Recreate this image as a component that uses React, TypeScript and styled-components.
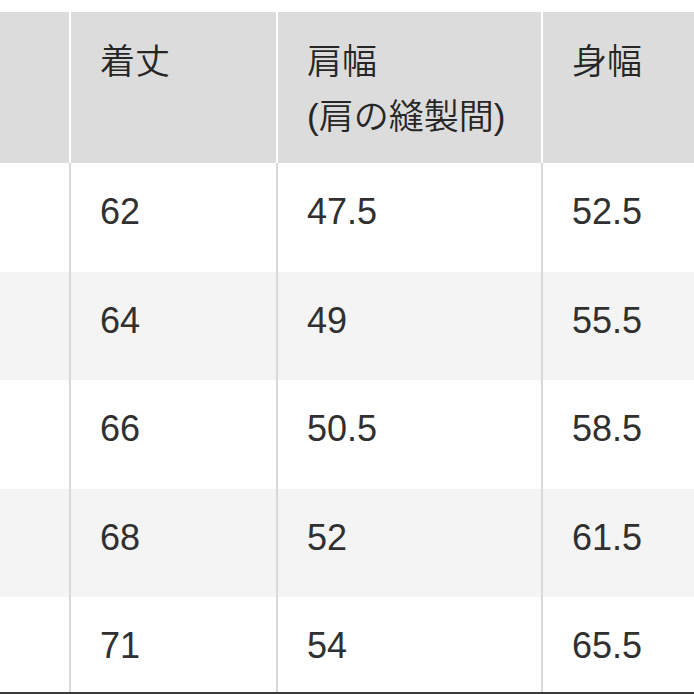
import styled, { createGlobalStyle } from 'styled-components';

const GlobalStyle = createGlobalStyle`
  html, body {
    margin: 0;
    padding: 0;
    background: #ffffff;
  }
  body {
    font-family: 'Liberation Sans', 'Noto Sans CJK JP', sans-serif;
    color: #222222;
  }
`;

const Page = styled.div`
  width: 694px;
  height: 694px;
  box-sizing: border-box;
  padding-top: 12px;
  border-bottom: 2px solid #3a3a3a;
  overflow: hidden;
  background: #ffffff;
`;

const Row = styled.div<{ $head?: boolean; $alt?: boolean }>`
  display: grid;
  grid-template-columns: 69px 207px 265px 1fr;
  height: ${(p) => (p.$head ? '151px' : '108.5px')};
  background: ${(p) => (p.$head ? '#dcdcdc' : p.$alt ? '#f4f4f4' : '#ffffff')};
`;

const HeadCell = styled.div`
  box-sizing: border-box;
  padding: 19px 0 0 29px;
  font-family: 'Noto Sans CJK JP', 'Liberation Sans', sans-serif;
  font-size: 35px;
  font-weight: 350;
  line-height: 55px;
  color: #262626;
  & + & {
    border-left: 2px solid #ffffff;
  }
`;

const Paren = styled.span`
  font-family: 'Liberation Sans', sans-serif;
  font-weight: 400;
`;

const Cell = styled.div`
  box-sizing: border-box;
  padding: 29px 0 0 29px;
  font-size: 36px;
  line-height: 40px;
  color: #303030;
  & + & {
    border-left: 2px solid #d9d9d9;
  }
`;

const rows = [
  ['62', '47.5', '52.5'],
  ['64', '49', '55.5'],
  ['66', '50.5', '58.5'],
  ['68', '52', '61.5'],
  ['71', '54', '65.5'],
];

export default function App() {
  return (
    <>
      <GlobalStyle />
      <Page>
        <Row $head>
          <HeadCell />
          <HeadCell>着丈</HeadCell>
          <HeadCell>
            肩幅
            <br />
            <Paren>(</Paren>肩の縫製間<Paren>)</Paren>
          </HeadCell>
          <HeadCell>身幅</HeadCell>
        </Row>
        {rows.map((r, i) => (
          <Row key={r[0]} $alt={i % 2 === 1}>
            <Cell />
            {r.map((v, j) => (
              <Cell key={j}>{v}</Cell>
            ))}
          </Row>
        ))}
      </Page>
    </>
  );
}
